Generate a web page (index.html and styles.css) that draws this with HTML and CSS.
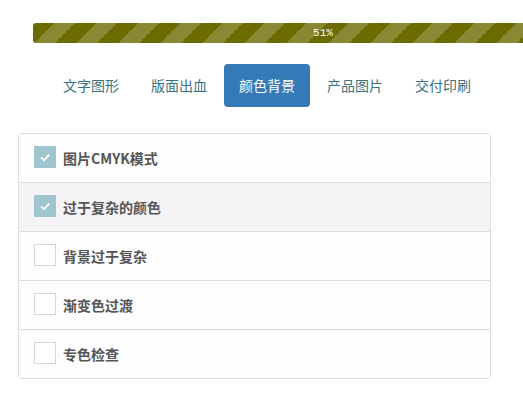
FILE: index.html
```html
<!DOCTYPE html>
<html lang="zh-CN">
<head>
    <meta charset="UTF-8">
    <meta name="viewport" content="width=device-width, initial-scale=1.0">
    <title>检查项</title>
    <link rel="stylesheet" href="styles.css">
</head>
<body>
    <div class="progress">
        <div class="progress-bar">51%</div>
    </div>

    <ul class="nav-pills">
        <li><a href="#">文字图形</a></li>
        <li><a href="#">版面出血</a></li>
        <li class="active"><a href="#">颜色背景</a></li>
        <li><a href="#">产品图片</a></li>
        <li><a href="#">交付印刷</a></li>
    </ul>

    <div class="list">
        <label class="item">
            <span class="box checked"><svg viewBox="0 0 22 22" width="22" height="22"><path d="M7 11.5 L10 14.2 L15.2 8.6" fill="none" stroke="#fff" stroke-width="1.8"/></svg></span>
            图片CMYK模式
        </label>
        <label class="item hover">
            <span class="box checked"><svg viewBox="0 0 22 22" width="22" height="22"><path d="M7 11.5 L10 14.2 L15.2 8.6" fill="none" stroke="#fff" stroke-width="1.8"/></svg></span>
            过于复杂的颜色
        </label>
        <label class="item">
            <span class="box"></span>
            背景过于复杂
        </label>
        <label class="item">
            <span class="box"></span>
            渐变色过渡
        </label>
        <label class="item">
            <span class="box"></span>
            专色检查
        </label>
    </div>
</body>
</html>
```

FILE: styles.css
```css
/* General */
body {
    margin: 0;
    background: #fff;
    font-family: "Liberation Sans", "Noto Sans CJK SC", sans-serif;
}

/* Progress */
.progress {
    margin: 23px 0 0 33px;
    height: 20px;
    border-radius: 3px 0 0 3px;
    overflow: hidden;
    background: #6b6b00;
}
.progress-bar {
    height: 20px;
    line-height: 20px;
    padding-left: 90px;
    text-align: center;
    color: #fff;
    font-family: "Liberation Mono", "DejaVu Sans Mono", monospace;
    font-size: 11px;
    background-color: #6b6b00;
    background-image: linear-gradient(-45deg, rgba(255, 255, 255, 0.2) 25%, transparent 25%, transparent 50%, rgba(255, 255, 255, 0.2) 50%, rgba(255, 255, 255, 0.2) 75%, transparent 75%, transparent);
    background-size: 42px 42px;
}

/* Tabs */
.nav-pills {
    list-style: none;
    margin: 21px 0 0;
    padding: 0 0 0 48px;
    display: flex;
}
.nav-pills li + li {
    margin-left: 2px;
}
.nav-pills a {
    display: block;
    padding: 12px 15px;
    line-height: 19px;
    font-family: "Noto Sans CJK SC", sans-serif;
    font-size: 14px;
    color: #3a7282;
    text-decoration: none;
    border-radius: 4px;
}
.nav-pills .active a {
    background: #337ab7;
    color: #fff;
}

/* Checklist */
.list {
    margin: 26px 0 0 18px;
    width: 471px;
    border: 1px solid #ddd;
    border-radius: 4px;
    overflow: hidden;
}
.item {
    display: flex;
    align-items: center;
    gap: 7px;
    height: 48px;
    padding-left: 15px;
    font-family: "Noto Sans CJK SC", sans-serif;
    font-size: 14px;
    font-weight: bold;
    color: #555;
    background: #fdfdfd;
    cursor: pointer;
}
.item + .item {
    border-top: 1px solid #ddd;
}
.item.hover {
    background: #f5f3f5;
}
.box {
    width: 20px;
    height: 20px;
    border: 1px solid #d6d6d6;
    background: #fff;
    display: flex;
    align-items: center;
    justify-content: center;
    flex-shrink: 0;
    margin-top: -2px;
}
.box.checked {
    width: 22px;
    height: 22px;
    border: none;
    background: #9fc6cf;
}
```
